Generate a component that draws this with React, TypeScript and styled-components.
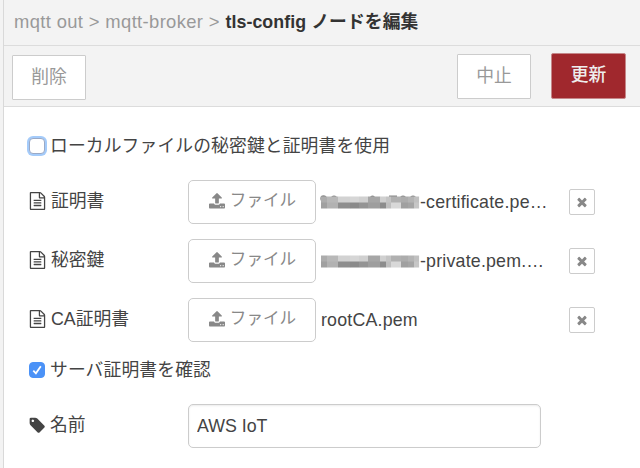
import React from "react";
import styled, { createGlobalStyle, css } from "styled-components";

const Global = createGlobalStyle`
  * { box-sizing: border-box; }
  body { margin: 0; background: #fff; }
  button, input { font: inherit; margin: 0; }
`;

const Page = styled.main`
  width: 640px;
  height: 468px;
  overflow: hidden;
  padding-left: 3px;
  background: #f3f3f3;
  font: 17.8px/24px "Liberation Sans", "Noto Sans CJK JP", sans-serif;
  color: #444;
`;

const Panel = styled.section`
  height: 100%;
  border-left: 1px solid #d9d9d9;
  background: #fff;
`;

const Header = styled.header`
  height: 46px;
  padding: 10px 0 0 10px;
  background: #f3f3f3;
  border-bottom: 1px solid #dcdcdc;
  color: #999;
  white-space: pre;
`;

const Trail = styled.span`
  font-size: 18.4px;
  letter-spacing: 0.36px;
`;

const Current = styled.strong`
  color: #333;
  letter-spacing: 0.08px;
`;

const Toolbar = styled.div`
  display: flex;
  align-items: flex-start;
  height: 61px;
  padding: 8px 14px 0 8px;
  background: #f3f3f3;
  border-bottom: 1px solid #dcdcdc;
`;

const Spacer = styled.div`
  flex: 1;
`;

const Action = styled.button<{ $primary?: boolean; $low?: boolean }>`
  width: ${(p) => (p.$primary ? 75 : 74)}px;
  height: ${(p) => (p.$primary ? 46 : 45)}px;
  margin-top: ${(p) => (p.$low ? 1 : p.$primary ? -1 : 0)}px;
  margin-right: ${(p) => (p.$primary || p.$low ? 0 : 20)}px;
  padding: 0 0 2px;
  border: 1px solid #ccc;
  border-radius: 1px;
  background: #fff;
  color: #999;
  ${(p) =>
    p.$primary &&
    css`
      border-color: #c58789;
      border-radius: 2px;
      background: #a0282d;
      color: #eee;
      font-weight: 500;
    `}
`;

const Form = styled.form`
  padding: 26px 0 0 25px;
`;

const CheckRow = styled.label<{ $gap: number }>`
  display: flex;
  align-items: center;
  height: 26px;
  margin-bottom: ${(p) => p.$gap}px;
  letter-spacing: 0.12px;
`;

const CheckBox = styled.span<{ $checked?: boolean }>`
  display: flex;
  align-items: center;
  justify-content: center;
  width: 16px;
  height: 16px;
  margin: 0 5px 1px 0;
  border: 1px solid #9aa9c6;
  border-radius: 4px;
  background: #fff;
  box-shadow: 0 0 0 2px #a4cbfa;
  ${(p) =>
    p.$checked &&
    css`
      border-color: #4b92f7;
      background: #4b92f7;
      box-shadow: none;
    `}
`;

const Row = styled.div`
  display: flex;
  align-items: center;
  height: 44px;
  margin-bottom: 15px;
`;

const RowLabel = styled.label`
  display: flex;
  align-items: center;
  gap: 5px;
  width: 159px;
  padding-bottom: 2px;
`;

const FileButton = styled.button`
  display: flex;
  align-items: center;
  justify-content: center;
  gap: 5px;
  width: 128px;
  height: 44px;
  padding: 0 0 2px 1px;
  border: 1px solid #ccc;
  border-radius: 5px;
  background: #fff;
  color: #888;
  font-size: 16.6px;
`;

const FileName = styled.span`
  display: flex;
  align-items: center;
  width: 253px;
  padding-left: 5px;
  white-space: nowrap;
  letter-spacing: 0.2px;
`;

const Clear = styled.button`
  display: flex;
  align-items: center;
  justify-content: center;
  width: 26px;
  height: 26px;
  padding: 0;
  border: 1px solid #ccc;
  border-radius: 2px;
  background: #fff;
  color: #888;
`;

const NameInput = styled.input`
  width: 353px;
  height: 44px;
  padding: 0 8px;
  border: 1px solid #ccc;
  border-radius: 5px;
  background: #fff;
  color: #444;
  box-shadow: inset 0 1px 2px rgba(0, 0, 0, 0.08);
  outline: none;
`;

const Glyph = styled.svg`
  flex: none;
  fill: currentColor;
`;

const paths = {
  file: "M1596 380q28 28 48 76t20 88v1152q0 40-28 68t-68 28h-1344q-40 0-68-28t-28-68v-1600q0-40 28-68t68-28h896q40 0 88 20t76 48zm-444-244v376h376q-10-29-22-41l-313-313q-12-12-41-22zm384 1528v-1024h-416q-40 0-68-28t-28-68v-416h-768v1536h1280zM512 800q0-14 9-23t23-9h704q14 0 23 9t9 23v64q0 14-9 23t-23 9h-704q-14 0-23-9t-9-23v-64zm736 224q14 0 23 9t9 23v64q0 14-9 23t-23 9h-704q-14 0-23-9t-9-23v-64q0-14 9-23t23-9h704zm0 256q14 0 23 9t9 23v64q0 14-9 23t-23 9h-704q-14 0-23-9t-9-23v-64q0-14 9-23t23-9h704z",
  upload:
    "M1344 1472q0-26-19-45t-45-19-45 19-19 45 19 45 45 19 45-19 19-45zm256 0q0-26-19-45t-45-19-45 19-19 45 19 45 45 19 45-19 19-45zm128-224v320q0 40-28 68t-68 28h-1472q-40 0-68-28t-28-68v-320q0-40 28-68t68-28h427q21 56 70.500 92t110.500 36h256q61 0 110.500-36t70.500-92h427q40 0 68 28t28 68zm-325-648q-17 40-59 40h-256v448q0 26-19 45t-45 19h-256q-26 0-45-19t-19-45v-448h-256q-42 0-59-40-17-39 14-69l448-448q18-19 45-19t45 19l448 448q31 30 14 69z",
  times:
    "M1490 1322q0 40-28 68l-136 136q-28 28-68 28t-68-28l-294-294-294 294q-28 28-68 28t-68-28l-136-136q-28-28-28-68t28-68l294-294-294-294q-28-28-28-68t28-68l136-136q28-28 68-28t68 28l294 294 294-294q28-28 68-28t68 28l136 136q28 28 28 68t-28 68l-294 294 294 294q28 28 28 68z",
  tag: "M576 448q0-53-37.500-90.500t-90.500-37.500-90.500 37.500-37.500 90.500 37.500 90.500 90.500 37.500 90.500-37.500 37.500-90.500zm1067 576q0 53-37 90l-491 492q-39 37-91 37-53 0-90-37l-715-716q-38-37-64.500-101t-26.500-117v-416q0-52 38-90t90-38h416q53 0 117 26.500t102 64.500l715 714q37 39 37 91z",
};

function FileIcon() {
  return (
    <Glyph width="17" height="18" viewBox="64 0 1664 1792">
      <path fillRule="evenodd" d={paths.file} />
    </Glyph>
  );
}

function UploadIcon() {
  return (
    <Glyph width="16" height="16" viewBox="64 60 1664 1664">
      <path d={paths.upload} />
    </Glyph>
  );
}

/* Mosaic covering the private part of a file name: [width, upper grey, lower grey] per block. */
const mosaic = [
  [6, 172, 160],
  [11, 184, 178],
  [12, 210, 142],
  [9, 214, 138],
  [9, 208, 148],
  [12, 166, 158],
  [6, 208, 140],
  [5, 196, 190],
  [10, 176, 216],
  [7, 172, 160],
  [6, 180, 165],
  [5, 192, 198],
];

const Mosaic = styled.svg`
  flex: none;
  width: 98px;
  height: 16px;
  margin: 0 1px 0 0;
  overflow: visible;
  filter: blur(0.5px);
`;

function Redacted({ peeking }: { peeking: boolean }) {
  let x = 0;
  return (
    <Mosaic viewBox="0 0 98 16">
      {peeking && (
        <g fill="#888">
          <circle cx="2.5" cy="4.5" r="3.2" />
          <circle cx="13" cy="4.5" r="3" />
          <circle cx="51.5" cy="4" r="2.5" />
          <rect x="68" y="1.5" width="8" height="2" />
          <circle cx="82" cy="4.5" r="3" />
          <circle cx="92" cy="4.5" r="3" />
        </g>
      )}
      {mosaic.map(([w, top, bottom], i) => {
        const left = x;
        x += w;
        return (
          <g key={i}>
            <rect x={left} y="2.5" width={w + 0.1} height="6.5" fill={`rgb(${top},${top},${top})`} />
            <rect x={left} y="8.5" width={w + 0.1} height="6" fill={`rgb(${bottom},${bottom},${bottom})`} />
          </g>
        );
      })}
    </Mosaic>
  );
}

const files = [
  { label: "証明書", name: "-certificate.pe…", redacted: true },
  { label: "秘密鍵", name: "-private.pem.…", redacted: true },
  { label: "CA証明書", name: "rootCA.pem", redacted: false },
];

export default function App() {
  return (
    <Page>
      <Global />
      <Panel>
        <Header>
          <Trail>{"mqtt out > mqtt-broker > "}</Trail>
          <Current>tls-config ノードを編集</Current>
        </Header>
        <Toolbar>
          <Action $low>削除</Action>
          <Spacer />
          <Action>中止</Action>
          <Action $primary>更新</Action>
        </Toolbar>
        <Form onSubmit={(e) => e.preventDefault()}>
          <CheckRow $gap={21}>
            <CheckBox />
            ローカルファイルの秘密鍵と証明書を使用
          </CheckRow>
          {files.map((f, i) => (
            <Row key={f.label}>
              <RowLabel>
                <FileIcon />
                {f.label}
              </RowLabel>
              <FileButton type="button">
                <UploadIcon />
                ファイル
              </FileButton>
              <FileName>
                {f.redacted && <Redacted peeking={i === 0} />}
                {f.name}
              </FileName>
              <Clear type="button" aria-label="clear">
                <Glyph width="14" height="14" viewBox="0 0 1792 1792">
                  <path d={paths.times} />
                </Glyph>
              </Clear>
            </Row>
          ))}
          <CheckRow $gap={21}>
            <CheckBox $checked>
              <svg width="12" height="12" viewBox="0 0 12 12" fill="none" stroke="#fff" strokeWidth="1.8">
                <path d="M2.3 6.6 4.9 9.3 9.8 2.2" />
              </svg>
            </CheckBox>
            サーバ証明書を確認
          </CheckRow>
          <Row>
            <RowLabel>
              <Glyph width="16" height="16" viewBox="64 64 1600 1600">
                <path d={paths.tag} />
              </Glyph>
              名前
            </RowLabel>
            <NameInput defaultValue="AWS IoT" />
          </Row>
        </Form>
      </Panel>
    </Page>
  );
}
